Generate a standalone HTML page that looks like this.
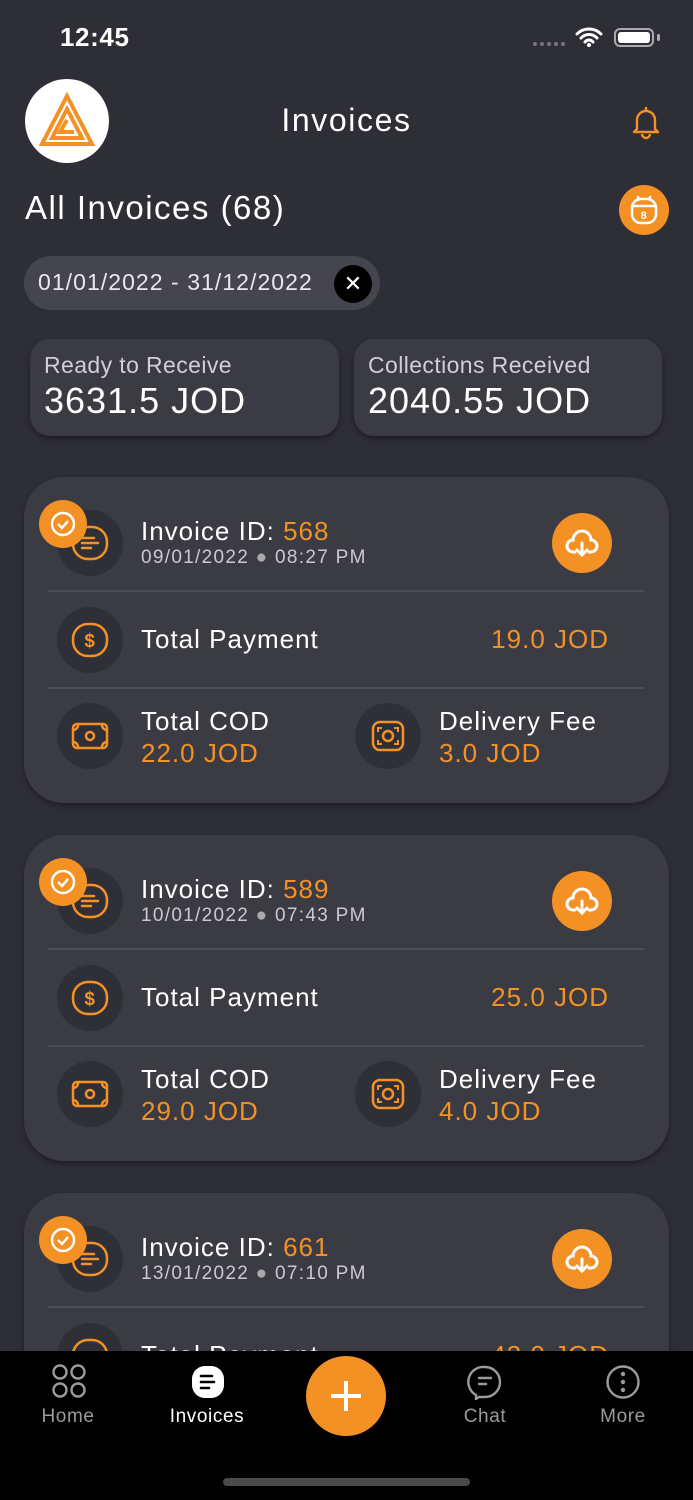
<!DOCTYPE html>
<html><head><meta charset="utf-8"><style>
*{margin:0;padding:0;box-sizing:border-box}
html{overflow:hidden;height:1500px}
body{width:693px;height:1500px;background:#2e2e36;font-family:"Liberation Sans",sans-serif;color:#fff;position:relative;overflow:hidden;letter-spacing:0.6px}
.a{position:absolute}
.or{color:#f39125}
.stat{position:absolute;top:339px;height:97px;background:#3b3b44;border-radius:20px;box-shadow:0 3px 6px rgba(0,0,0,.35);padding:13px 0 0 14px}
.stat .l{font-size:23px;color:#cfcfd4;letter-spacing:0.4px}
.stat .v{font-size:36px;margin-top:1px;letter-spacing:1px}
.card{position:absolute;left:24px;width:645px;height:326px;background:#3b3b44;border-radius:40px;box-shadow:0 3px 6px rgba(0,0,0,.35)}
.ic{position:absolute;width:66px;height:66px;border-radius:50%;background:#2f2f37}
.ic svg{position:absolute;left:13px;top:13px}
.div{position:absolute;left:24px;width:596px;height:2px;background:#4d4d56}
.t{position:absolute;font-size:26px;white-space:nowrap;letter-spacing:1px}
.d{font-size:19px;color:#c9c9ce;letter-spacing:1.3px}
.tab{position:absolute;top:1406px;font-size:19px;color:#9a9a9f;text-align:center}
</style></head><body>
<div class="a" style="left:60px;top:22px;font-size:26px;font-weight:bold">12:45</div>
<div class="a" style="left:533px;top:42px;width:32px;height:4px;border-top:4px dotted #777"></div>
<svg class="a" style="left:575px;top:27px" width="28" height="20" viewBox="0 0 28 20"><path d="M2 7a17 17 0 0 1 24 0M6 11a11 11 0 0 1 16 0M10 15a5 5 0 0 1 8 0" stroke="#fff" stroke-width="3" fill="none" stroke-linecap="round"/><circle cx="14" cy="18" r="2" fill="#fff"/></svg>
<div class="a" style="left:614px;top:28px;width:40px;height:19px;border:2px solid #aaa;border-radius:6px;padding:2px"><div style="width:100%;height:100%;background:#fff;border-radius:3px"></div></div>
<div class="a" style="left:657px;top:34px;width:3px;height:7px;background:#aaa;border-radius:2px"></div>

<div class="a" style="left:25px;top:79px;width:84px;height:84px;border-radius:50%;background:#fff"></div>
<svg class="a" style="left:38px;top:92px" width="58" height="58" viewBox="0 0 58 58"><path d="M29 4L4 52H54Z M29 17L14 46H44Z M29 28L22 40H36" stroke="#f39125" stroke-width="4" fill="none"/></svg>
<div class="a" style="left:0;width:693px;top:102px;text-align:center;font-size:32px;letter-spacing:1.6px">Invoices</div>
<svg class="a" style="left:630px;top:104px" width="32" height="36" viewBox="0 0 32 36"><path d="M16 3v3M7 25V16a9 9 0 0 1 18 0v9l3 3H4z M12 30a4 4 0 0 0 8 0" stroke="#f39125" stroke-width="2.4" fill="none" stroke-linejoin="round"/></svg>
<div class="a" style="left:25px;top:189px;font-size:33px;letter-spacing:1.5px">All Invoices (68)</div>
<div class="a" style="left:619px;top:185px;width:50px;height:50px;border-radius:50%;background:#f39125"></div>
<svg class="a" style="left:628px;top:193px" width="32" height="34" viewBox="0 0 32 34"><rect x="4" y="6" width="24" height="24" rx="9" stroke="#fff" stroke-width="2.5" fill="none"/><path d="M4 13h24M10 3v5M22 3v5" stroke="#fff" stroke-width="2.5"/><text x="16" y="26" font-size="11" font-weight="bold" fill="#fff" text-anchor="middle" font-family="Liberation Sans">8</text></svg>
<div class="a" style="left:24px;top:256px;width:356px;height:54px;border-radius:27px;background:#45454e"></div>
<div class="a" style="left:38px;top:269px;font-size:23px;color:#e8e8ea;letter-spacing:1.05px">01/01/2022 - 31/12/2022</div>
<div class="a" style="left:334px;top:265px;width:38px;height:38px;border-radius:50%;background:#000;text-align:center;line-height:38px;font-size:22px;letter-spacing:0">✕</div>

<div class="stat" style="left:30px;width:309px"><div class="l">Ready to Receive</div><div class="v">3631.5 JOD</div></div>
<div class="stat" style="left:354px;width:308px"><div class="l">Collections Received</div><div class="v">2040.55 JOD</div></div>

<div class="card" style="top:477px">
 <div class="ic" style="left:33px;top:33px"><svg width="40" height="40" viewBox="0 0 40 40"><rect x="3" y="4" width="34" height="32" rx="15" stroke="#f39125" stroke-width="2.5" fill="none"/><path d="M12 15h12M12 20h16M12 25h9" stroke="#f39125" stroke-width="2.5" stroke-linecap="round"/></svg></div>
 <div class="a" style="left:15px;top:23px;width:48px;height:48px;border-radius:50%;background:#f39125"></div>
 <svg class="a" style="left:25px;top:33px" width="28" height="28"><circle cx="14" cy="14" r="11" stroke="#fff" stroke-width="2.4" fill="none"/><path d="M9 14l4 4 6-7" stroke="#fff" stroke-width="2.4" fill="none"/></svg>
 <div class="t" style="left:117px;top:39px">Invoice ID: <span class="or">568</span></div>
 <div class="t d" style="left:117px;top:70px">09/01/2022 <span style="color:#aaa">●</span> 08:27 PM</div>
 <div class="a" style="left:528px;top:36px;width:60px;height:60px;border-radius:50%;background:#f39125"></div>
 <svg class="a" style="left:540px;top:48px" width="36" height="36" viewBox="0 0 36 36"><path d="M11 27H9a6 6 0 0 1 0-12 9 9 0 0 1 18 0 6 6 0 0 1 0 12h-2" stroke="#fff" stroke-width="3" fill="none" stroke-linecap="round"/><path d="M18 18v12M13 25l5 5 5-5" stroke="#fff" stroke-width="3" fill="none" stroke-linecap="round"/></svg>
 <div class="div" style="top:113px"></div>
 <div class="ic" style="left:33px;top:130px"><svg width="40" height="40" viewBox="0 0 40 40"><rect x="3" y="4" width="34" height="32" rx="15" stroke="#f39125" stroke-width="2.5" fill="none"/><text x="20" y="27" font-size="19" font-weight="bold" fill="#f39125" text-anchor="middle" font-family="Liberation Sans">$</text></svg></div>
 <div class="t" style="left:117px;top:147px">Total Payment</div>
 <div class="t or" style="right:60px;top:147px">19.0 JOD</div>
 <div class="div" style="top:210px"></div>
 <div class="ic" style="left:33px;top:226px"><svg width="40" height="40" viewBox="0 0 40 40"><rect x="3" y="8" width="34" height="24" rx="4" stroke="#f39125" stroke-width="2.5" fill="none"/><circle cx="20" cy="20" r="4" stroke="#f39125" stroke-width="2.5" fill="none"/><path d="M3 14a5 5 0 0 0 5-5M37 14a5 5 0 0 1-5-5M3 26a5 5 0 0 1 5 5M37 26a5 5 0 0 0-5 5" stroke="#f39125" stroke-width="2.5" fill="none"/></svg></div>
 <div class="t" style="left:117px;top:229px">Total COD</div>
 <div class="t or" style="left:117px;top:261px">22.0 JOD</div>
 <div class="ic" style="left:331px;top:226px"><svg width="40" height="40" viewBox="0 0 40 40"><rect x="5" y="6" width="30" height="28" rx="7" stroke="#f39125" stroke-width="2.5" fill="none"/><circle cx="20" cy="20" r="5" stroke="#f39125" stroke-width="2.5" fill="none"/><path d="M10 16v-4h4M30 16v-4h-4M10 24v4h4M30 24v4h-4" stroke="#f39125" stroke-width="2" fill="none"/></svg></div>
 <div class="t" style="left:415px;top:229px">Delivery Fee</div>
 <div class="t or" style="left:415px;top:261px">3.0 JOD</div>
</div>
<div class="card" style="top:835px">
 <div class="ic" style="left:33px;top:33px"><svg width="40" height="40" viewBox="0 0 40 40"><rect x="3" y="4" width="34" height="32" rx="15" stroke="#f39125" stroke-width="2.5" fill="none"/><path d="M12 15h12M12 20h16M12 25h9" stroke="#f39125" stroke-width="2.5" stroke-linecap="round"/></svg></div>
 <div class="a" style="left:15px;top:23px;width:48px;height:48px;border-radius:50%;background:#f39125"></div>
 <svg class="a" style="left:25px;top:33px" width="28" height="28"><circle cx="14" cy="14" r="11" stroke="#fff" stroke-width="2.4" fill="none"/><path d="M9 14l4 4 6-7" stroke="#fff" stroke-width="2.4" fill="none"/></svg>
 <div class="t" style="left:117px;top:39px">Invoice ID: <span class="or">589</span></div>
 <div class="t d" style="left:117px;top:70px">10/01/2022 <span style="color:#aaa">●</span> 07:43 PM</div>
 <div class="a" style="left:528px;top:36px;width:60px;height:60px;border-radius:50%;background:#f39125"></div>
 <svg class="a" style="left:540px;top:48px" width="36" height="36" viewBox="0 0 36 36"><path d="M11 27H9a6 6 0 0 1 0-12 9 9 0 0 1 18 0 6 6 0 0 1 0 12h-2" stroke="#fff" stroke-width="3" fill="none" stroke-linecap="round"/><path d="M18 18v12M13 25l5 5 5-5" stroke="#fff" stroke-width="3" fill="none" stroke-linecap="round"/></svg>
 <div class="div" style="top:113px"></div>
 <div class="ic" style="left:33px;top:130px"><svg width="40" height="40" viewBox="0 0 40 40"><rect x="3" y="4" width="34" height="32" rx="15" stroke="#f39125" stroke-width="2.5" fill="none"/><text x="20" y="27" font-size="19" font-weight="bold" fill="#f39125" text-anchor="middle" font-family="Liberation Sans">$</text></svg></div>
 <div class="t" style="left:117px;top:147px">Total Payment</div>
 <div class="t or" style="right:60px;top:147px">25.0 JOD</div>
 <div class="div" style="top:210px"></div>
 <div class="ic" style="left:33px;top:226px"><svg width="40" height="40" viewBox="0 0 40 40"><rect x="3" y="8" width="34" height="24" rx="4" stroke="#f39125" stroke-width="2.5" fill="none"/><circle cx="20" cy="20" r="4" stroke="#f39125" stroke-width="2.5" fill="none"/><path d="M3 14a5 5 0 0 0 5-5M37 14a5 5 0 0 1-5-5M3 26a5 5 0 0 1 5 5M37 26a5 5 0 0 0-5 5" stroke="#f39125" stroke-width="2.5" fill="none"/></svg></div>
 <div class="t" style="left:117px;top:229px">Total COD</div>
 <div class="t or" style="left:117px;top:261px">29.0 JOD</div>
 <div class="ic" style="left:331px;top:226px"><svg width="40" height="40" viewBox="0 0 40 40"><rect x="5" y="6" width="30" height="28" rx="7" stroke="#f39125" stroke-width="2.5" fill="none"/><circle cx="20" cy="20" r="5" stroke="#f39125" stroke-width="2.5" fill="none"/><path d="M10 16v-4h4M30 16v-4h-4M10 24v4h4M30 24v4h-4" stroke="#f39125" stroke-width="2" fill="none"/></svg></div>
 <div class="t" style="left:415px;top:229px">Delivery Fee</div>
 <div class="t or" style="left:415px;top:261px">4.0 JOD</div>
</div>
<div class="card" style="top:1193px;height:290px">
 <div class="ic" style="left:33px;top:33px"><svg width="40" height="40" viewBox="0 0 40 40"><rect x="3" y="4" width="34" height="32" rx="15" stroke="#f39125" stroke-width="2.5" fill="none"/><path d="M12 15h12M12 20h16M12 25h9" stroke="#f39125" stroke-width="2.5" stroke-linecap="round"/></svg></div>
 <div class="a" style="left:15px;top:23px;width:48px;height:48px;border-radius:50%;background:#f39125"></div>
 <svg class="a" style="left:25px;top:33px" width="28" height="28"><circle cx="14" cy="14" r="11" stroke="#fff" stroke-width="2.4" fill="none"/><path d="M9 14l4 4 6-7" stroke="#fff" stroke-width="2.4" fill="none"/></svg>
 <div class="t" style="left:117px;top:39px">Invoice ID: <span class="or">661</span></div>
 <div class="t d" style="left:117px;top:70px">13/01/2022 <span style="color:#aaa">●</span> 07:10 PM</div>
 <div class="a" style="left:528px;top:36px;width:60px;height:60px;border-radius:50%;background:#f39125"></div>
 <svg class="a" style="left:540px;top:48px" width="36" height="36" viewBox="0 0 36 36"><path d="M11 27H9a6 6 0 0 1 0-12 9 9 0 0 1 18 0 6 6 0 0 1 0 12h-2" stroke="#fff" stroke-width="3" fill="none" stroke-linecap="round"/><path d="M18 18v12M13 25l5 5 5-5" stroke="#fff" stroke-width="3" fill="none" stroke-linecap="round"/></svg>
 <div class="div" style="top:113px"></div>
 <div class="ic" style="left:33px;top:130px"><svg width="40" height="40" viewBox="0 0 40 40"><rect x="3" y="4" width="34" height="32" rx="15" stroke="#f39125" stroke-width="2.5" fill="none"/></svg></div>
 <div class="t" style="left:117px;top:147px">Total Payment</div>
 <div class="t or" style="right:60px;top:147px">42.0 JOD</div>
</div>

<div class="a" style="left:0;top:1351px;width:693px;height:149px;background:#000"></div>
<svg class="a" style="left:51px;top:1363px" width="36" height="36" viewBox="0 0 36 36"><g stroke="#9a9a9f" stroke-width="2.4" fill="none"><circle cx="9" cy="9" r="6.5"/><circle cx="27" cy="9" r="6.5"/><circle cx="9" cy="27" r="6.5"/><circle cx="27" cy="27" r="6.5"/></g></svg>
<div class="tab" style="left:28px;width:80px">Home</div>
<svg class="a" style="left:190px;top:1364px" width="36" height="36" viewBox="0 0 36 36"><rect x="2" y="2" width="32" height="32" rx="13" fill="#fff"/><path d="M11 12h11M11 18h13M11 24h8" stroke="#000" stroke-width="2.6" stroke-linecap="round"/></svg>
<div class="tab" style="left:152px;width:110px;color:#fff">Invoices</div>
<div class="a" style="left:306px;top:1356px;width:80px;height:80px;border-radius:50%;background:#f39125"></div>
<div class="a" style="left:331px;top:1394px;width:30px;height:4px;background:#fff"></div>
<div class="a" style="left:344px;top:1381px;width:4px;height:30px;background:#fff"></div>
<svg class="a" style="left:467px;top:1364px" width="36" height="36" viewBox="0 0 36 36"><path d="M18 3a15 15 0 0 1 0 30h-6l-3 2v-4A15 15 0 0 1 18 3z" stroke="#9a9a9f" stroke-width="2.4" fill="none"/><path d="M12 14h12M12 20h7" stroke="#9a9a9f" stroke-width="2.4" stroke-linecap="round"/></svg>
<div class="tab" style="left:445px;width:80px">Chat</div>
<svg class="a" style="left:605px;top:1364px" width="36" height="36" viewBox="0 0 36 36"><circle cx="18" cy="18" r="15.5" stroke="#9a9a9f" stroke-width="2.4" fill="none"/><circle cx="18" cy="10" r="2.2" fill="#9a9a9f"/><circle cx="18" cy="18" r="2.2" fill="#9a9a9f"/><circle cx="18" cy="26" r="2.2" fill="#9a9a9f"/></svg>
<div class="tab" style="left:583px;width:80px">More</div>
<div class="a" style="left:223px;top:1478px;width:247px;height:8px;border-radius:4px;background:#4a4a4d"></div>
</body></html>
